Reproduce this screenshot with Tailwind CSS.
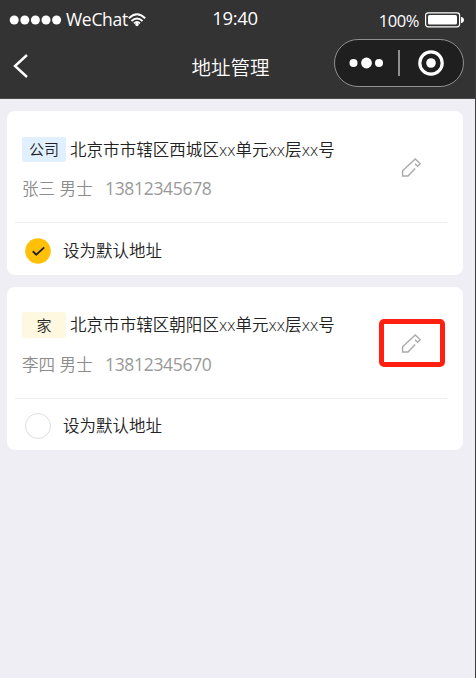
<!DOCTYPE html>
<html lang="zh-CN">
<head>
<meta charset="utf-8">
<title>地址管理</title>
<script src="https://cdn.jsdelivr.net/npm/@tailwindcss/browser@4"></script>
</head>
<body class="w-[476px] h-[678px] overflow-hidden bg-[#efeef4] font-['Open_Sans','Noto_Sans_CJK_SC',sans-serif] text-[#222]">
<div class="flex flex-col h-full border-r border-[#3d3d3d]">
  <header class="h-[99px] shrink-0 bg-[#333] text-white border-b border-[#4a4a4a]">
    <div class="grid grid-cols-3 h-[39px] px-[9px] pr-[11px] text-[17.5px] leading-[38px] whitespace-nowrap">
      <div class="flex h-[39px] items-center">
        <svg class="w-[54px] h-[10px]" viewBox="0 0 54 10" fill="#fff"><circle cx="5.2" cy="5" r="4.5"/><circle cx="15.8" cy="5" r="4.5"/><circle cx="26.4" cy="5" r="4.5"/><circle cx="37" cy="5" r="4.5"/><circle cx="47.6" cy="5" r="4.5"/></svg>
        <span class="ml-[3px] w-[62px] -mt-[1px] tracking-[-0.3px]">WeChat</span>
        <svg class="w-[18px] h-[14px] shrink-0" viewBox="0 0 18 14" fill="none" stroke="#fff" stroke-width="1.9"><path d="M.8 5.2Q9-2.8 17.2 5.2M3.5 8Q9 2.8 14.5 8M6 10.4Q9 7.7 12 10.4"/><circle cx="9" cy="11.5" r="1.7" fill="#fff" stroke="none"/></svg>
      </div>
      <div class="text-center text-[18.5px] leading-[36px] tracking-[-0.3px] pr-[3px]">19:40</div>
      <div class="flex h-[39px] items-center justify-end gap-[6px]">
        <span class="text-[16.5px] tracking-[-0.4px] pt-[3px]">100%</span>
        <svg class="w-[39px] h-[16px]" viewBox="0 0 39 16"><rect x=".6" y=".8" width="34" height="14" rx="2.5" fill="none" stroke="#fff" stroke-width="1.2"/><rect x="3" y="3" width="29" height="9.5" rx="1.5" fill="#fff"/><path d="M36 5c4 0 4 6 0 6z" fill="#fff"/></svg>
      </div>
    </div>
    <div class="grid grid-cols-[132px_197px_1fr] h-[59px] pr-[11px]">
      <svg class="ml-[12px] mt-[14px] w-[18px] h-[26px]" viewBox="0 0 18 26" fill="none" stroke="#fff" stroke-width="2.4"><path d="M15 2L3 13L15 24"/></svg>
      <h1 class="text-center text-[19.5px] leading-[57px] font-[350]">地址管理</h1>
      <div class="justify-self-end flex items-center w-[130px] h-[48px] rounded-full border border-[#909090] bg-[#1f1f1f]">
        <svg class="w-[128px] h-[46px]" viewBox="0 0 128 46" fill="#fff"><circle cx="18.5" cy="23" r="4"/><circle cx="31.5" cy="23" r="5.4"/><circle cx="44" cy="23" r="4"/><path d="M63 10h2v26h-2z" fill="#909090"/><circle cx="96" cy="23" r="11.2" fill="none" stroke="#fff" stroke-width="3.2"/><circle cx="96" cy="23" r="4.8"/></svg>
      </div>
    </div>
  </header>
  <main class="flex flex-col gap-[12px] px-[7px] pt-[12px] w-[470px]">
    <section class="h-[164px] rounded-[8px] bg-white pl-[8px] pr-[16px]">
      <div class="flex h-[112px] justify-between border-b border-[#ededed] pl-[7px]">
        <div class="pt-[26px] whitespace-nowrap">
          <div class="flex h-[25px] items-center">
            <span class="w-[44px] h-[25px] rounded-[2px] bg-[#e1f0ff] text-center text-[15px] leading-[25px] font-[350]">公司</span>
            <span class="ml-[4px] text-[16.5px] leading-[27px] tracking-[0.05px] font-[350]">北京市市辖区西城区xx单元xx层xx号</span>
          </div>
          <div class="mt-[13px] flex h-[27px] items-center text-[#8c8c8c]">
            <span class="w-[83px] text-[16.5px] font-[350] pt-[1px] tracking-[0.1px]">张三 男士</span><span class="text-[17.5px] tracking-[-0.32px] text-[#999]">13812345678</span>
          </div>
        </div>
        <svg class="mt-[46px] mr-[25px] w-[22px] h-[22px]" viewBox="0 0 22 22" fill="none" stroke="#aaa" stroke-width="1.4"><path d="M15.2 11.4L8 19H2.6V13.8L15.2 2L20.2 6.8L17.7 9.2L15 6.8"/></svg>
      </div>
      <div class="flex h-[52px] items-center pl-[10px] pt-[4px]">
        <svg class="w-[26px] h-[26px]" viewBox="0 0 26 26"><circle cx="13" cy="13" r="12.8" fill="#ffc107"/><path d="M7.8 13.2L11.3 16.6L19.2 9.4" fill="none" stroke="#222" stroke-width="1.9"/></svg>
        <span class="ml-[12px] text-[16.5px] font-[350]">设为默认地址</span>
      </div>
    </section>
    <section class="h-[163px] rounded-[8px] bg-white pl-[8px] pr-[16px]">
      <div class="relative flex h-[112px] justify-between border-b border-[#ededed] pl-[7px]">
        <div class="pt-[25px] whitespace-nowrap">
          <div class="flex h-[26px] items-center">
            <span class="w-[44px] h-[26px] rounded-[2px] bg-[#fff8e1] text-center text-[15px] leading-[26px] font-[350]">家</span>
            <span class="ml-[4px] text-[16.5px] leading-[26px] tracking-[0.05px] font-[350]">北京市市辖区朝阳区xx单元xx层xx号</span>
          </div>
          <div class="mt-[13px] flex h-[27px] items-center text-[#8c8c8c]">
            <span class="w-[83px] text-[16.5px] font-[350] pt-[1px] tracking-[0.1px]">李四 男士</span><span class="text-[17.5px] tracking-[-0.32px] text-[#999]">13812345670</span>
          </div>
        </div>
        <svg class="mt-[46px] mr-[25px] w-[22px] h-[22px]" viewBox="0 0 22 22" fill="none" stroke="#aaa" stroke-width="1.4"><path d="M15.2 11.4L8 19H2.6V13.8L15.2 2L20.2 6.8L17.7 9.2L15 6.8"/></svg>
        <div class="absolute right-[2px] top-[32px] w-[66px] h-[48px] rounded-[5px] border-[5px] border-[#ff2012]"></div>
      </div>
      <div class="flex h-[51px] items-center pl-[10px] pt-[3px]">
        <span class="w-[26px] h-[26px] rounded-full border border-[#ddd]"></span>
        <span class="ml-[12px] text-[16.5px] font-[350]">设为默认地址</span>
      </div>
    </section>
  </main>
</div>
</body>
</html>
